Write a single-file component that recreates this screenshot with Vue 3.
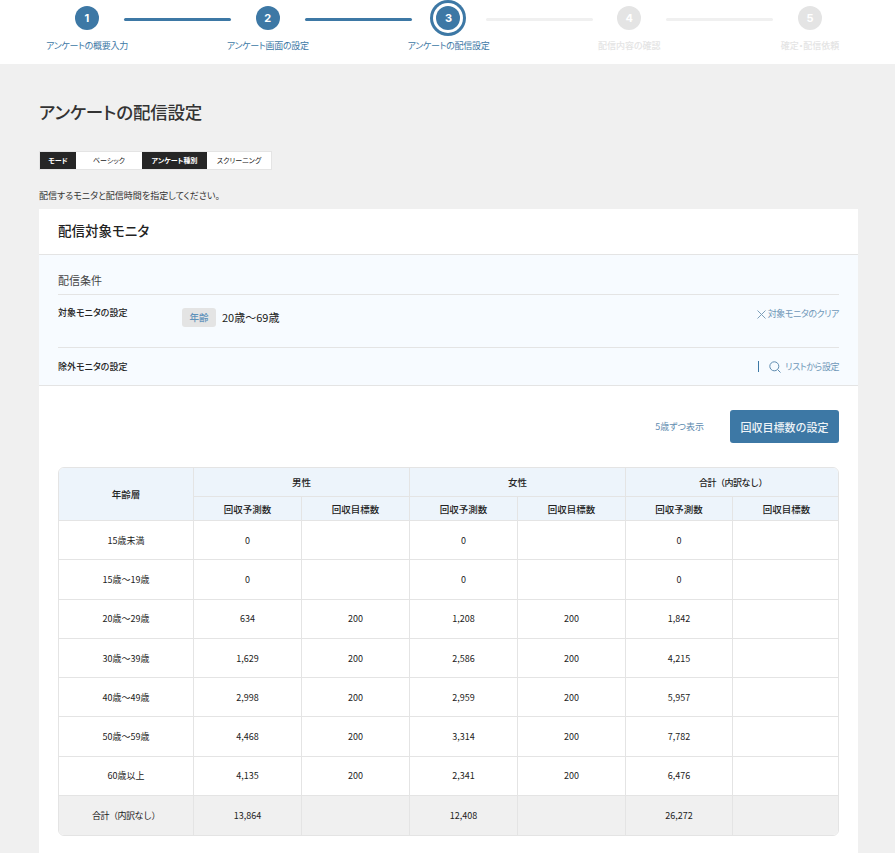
<script setup>
const steps = [
  { n: 1, label: 'アンケートの概要入力', state: 'done' },
  { n: 2, label: 'アンケート画面の設定', state: 'done' },
  { n: 3, label: 'アンケートの配信設定', state: 'active' },
  { n: 4, label: '配信内容の確認', state: 'todo' },
  { n: 5, label: '確定・配信依頼', state: 'todo' }
]
const rows = [
  ['15歳未満', '0', '', '0', '', '0', ''],
  ['15歳〜19歳', '0', '', '0', '', '0', ''],
  ['20歳〜29歳', '634', '200', '1,208', '200', '1,842', ''],
  ['30歳〜39歳', '1,629', '200', '2,586', '200', '4,215', ''],
  ['40歳〜49歳', '2,998', '200', '2,959', '200', '5,957', ''],
  ['50歳〜59歳', '4,468', '200', '3,314', '200', '7,782', ''],
  ['60歳以上', '4,135', '200', '2,341', '200', '6,476', '']
]
const total = ['合計（内訳なし）', '13,864', '', '12,408', '', '26,272', '']
</script>

<template>
  <div class="page">
    <header class="stepper">
      <div v-for="s in steps" :key="s.n" class="step" :class="s.state">
        <div class="circle-wrap">
          <span class="circle">{{ s.n }}</span>
        </div>
        <span class="step-label">{{ s.label }}</span>
        <span v-if="s.n < 5" class="connector"></span>
      </div>
    </header>

    <main class="main">
      <h1 class="title">アンケートの配信設定</h1>
      <div class="tags">
        <span class="tag-k">モード</span>
        <span class="tag-v basic">ベーシック</span>
        <span class="tag-k kind">アンケート種別</span>
        <span class="tag-v screening">スクリーニング</span>
      </div>
      <p class="lead">配信するモニタと配信時間を指定してください。</p>

      <section class="card">
        <h2 class="card-title">配信対象モニタ</h2>
        <div class="cond">
          <h3 class="cond-title">配信条件</h3>
          <div class="cond-row first">
            <span class="cond-label">対象モニタの設定</span>
            <span class="pill">年齢</span>
            <span class="cond-value">20歳〜69歳</span>
            <a class="link clear">
              <svg width="9" height="9" viewBox="0 0 9 9"><path d="M.5.5l8 8M8.500.5l-8 8" stroke="#7d9fba" fill="none" stroke-width="1"/></svg>
              対象モニタのクリア
            </a>
          </div>
          <div class="cond-row second">
            <span class="cond-label">除外モニタの設定</span>
            <span class="sep"></span>
            <a class="link search">
              <svg width="12" height="12" viewBox="0 0 12 12"><circle cx="5.300" cy="5.300" r="4.500" stroke="#5f8cb0" fill="none"/><path d="M8.500 8.500l3 3" stroke="#5f8cb0" fill="none"/></svg>
              リストから設定
            </a>
          </div>
        </div>

        <div class="actions">
          <a class="five">5歳ずつ表示</a>
          <button class="primary">回収目標数の設定</button>
        </div>

        <div class="table">
          <div class="th age-h">年齢層</div>
          <div class="th group g1">男性</div>
          <div class="th group g2">女性</div>
          <div class="th group g3 paren">合計（内訳なし）</div>
          <div class="th sub">回収予測数</div>
          <div class="th sub">回収目標数</div>
          <div class="th sub">回収予測数</div>
          <div class="th sub">回収目標数</div>
          <div class="th sub">回収予測数</div>
          <div class="th sub last">回収目標数</div>
          <template v-for="r in rows" :key="r[0]">
            <div v-for="(c, i) in r" :key="i" class="td" :class="{ last: i === 6 }">{{ c }}</div>
          </template>
          <div v-for="(c, i) in total" :key="'t' + i" class="td total" :class="{ last: i === 6, paren: i === 0 }">{{ c }}</div>
        </div>
      </section>
    </main>
  </div>
</template>

<style>
html, body { margin: 0; background: #f0f0f0; }
</style>

<style scoped>
.page {
  height: 853px;
  overflow: hidden;
  background: #f0f0f0;
  font-family: "Noto Sans CJK JP", "Noto Sans", sans-serif;
  font-feature-settings: "palt";
  color: #222;
}
.stepper {
  display: flex;
  height: 64px;
  background: #fff;
  overflow: hidden;
}
.step {
  position: relative;
  flex: 0 0 180.75px;
  display: flex;
  flex-direction: column;
  align-items: center;
  color: #3d78a5;
}
.step:first-child { margin-left: -3.4px; }
.circle-wrap {
  height: 36px;
  display: flex;
  align-items: center;
  justify-content: center;
}
.circle {
  width: 24px;
  height: 24px;
  border-radius: 50%;
  background: #3d78a5;
  color: #fff;
  font: 700 11px/24px Inter, sans-serif;
  text-align: center;
}
.active .circle {
  box-shadow: 0 0 0 3px #fff, 0 0 0 6px #3d78a5;
}
.todo .circle { background: #e4e4e4; }
.todo { color: #e4e4e4; }
.step-label {
  margin-top: 1px;
  font-size: 9px;
  line-height: 18px;
  white-space: nowrap;
  letter-spacing: -.3px;
}
.todo .step-label { letter-spacing: 0; font-weight: 500; }
.connector {
  position: absolute;
  left: 127.4px;
  top: 18px;
  width: 107px;
  height: 3px;
  border-radius: 2px;
  background: #3d78a5;
}
.active .connector, .todo .connector { background: #f0f0f0; }
.main { padding: 0 37px 0 39px; }
.title {
  margin: 34px 0 0;
  font-size: 17.500px;
  letter-spacing: -.2px;
  line-height: 28px;
  font-weight: 500;
  color: #333;
}
.tags {
  display: flex;
  width: fit-content;
  margin-top: 25px;
  border: 1px solid #e4e4e4;
  background: #fff;
  font-size: 7px;
  line-height: 17px;
  height: 17px;
}
.tag-k { background: #262626; color: #fff; text-align: center; font-weight: 700; }
.tag-v { text-align: center; }
.tag-k:first-child { width: 36px; }
.basic { width: 66px; }
.kind { width: 65px; }
.screening { width: 64px; }
.lead {
  margin: 17px 0 0;
  font-size: 9px;
  line-height: 18px;
  color: #333;
}
.card { margin-top: 4px; background: #fff; padding-bottom: 40px; }
.card-title {
  margin: 0;
  height: 45px;
  padding-left: 19px;
  font-size: 13.500px;
  line-height: 43px;
  font-weight: 500;
  color: #222;
  border-bottom: 1px solid #e4e4e4;
}
.cond {
  background: #f7fbff;
  border-bottom: 1px solid #e4e4e4;
  padding: 0 19px;
  height: 130px;
}
.cond-title {
  margin: 0;
  height: 39px;
  font-size: 11px;
  line-height: 50px;
  font-weight: 400;
  color: #444;
  border-bottom: 1px solid #e4e4e4;
}
.cond-row { display: flex; align-items: flex-start; position: relative; }
.first { height: 52px; border-bottom: 1px solid #e4e4e4; padding-top: 0; }
.second { height: 37px; align-items: center; }
.cond-label {
  width: 124px;
  font-size: 9px;
  font-weight: 500;
  line-height: 36px;
  color: #222;
}
.pill {
  margin-top: 13px;
  width: 34px;
  height: 19px;
  border-radius: 3px;
  background: #e4e4e4;
  color: #5f92bb;
  font-size: 9.500px;
  font-weight: 500;
  line-height: 19px;
  text-align: center;
}
.cond-value {
  margin: 13px 0 0 6px;
  font-size: 11px;
  line-height: 19px;
  color: #222;
}
.link {
  display: flex;
  align-items: center;
  gap: 2px;
  color: #6f97b8;
  font-size: 9px;
  letter-spacing: -.45px;
  white-space: nowrap;
}
.clear { margin: 11px 0 0 auto; line-height: 16px; }
.sep { margin-left: auto; width: 1px; height: 11px; background: #3d78a5; }
.search { margin-left: 10px; gap: 4px; }
.actions {
  display: flex;
  justify-content: flex-end;
  align-items: center;
  padding: 24px 19px 0 0;
}
.five { color: #5f8cb0; font-size: 9px; margin-right: 26px; }
.primary {
  width: 109px;
  height: 33px;
  padding: 0;
  border: 0;
  border-radius: 3px;
  background: #3d78a5;
  color: #eef3f7;
  font-family: inherit;
  font-size: 11px;
  font-weight: 500;
}
.table {
  margin: 24px 19px 0;
  width: 781px;
  box-sizing: border-box;
  display: grid;
  grid-template-columns: 135px 108px 108px 108px 108px 107px 107px;
  grid-template-rows: 29px 24px repeat(8, 39.3px);
  border: 1px solid #e4e4e4;
  border-radius: 6px;
  overflow: hidden;
  font-size: 9px;
  color: #222;
}
.th, .td {
  display: flex;
  align-items: center;
  justify-content: center;
  border-right: 1px solid #e4e4e4;
  border-bottom: 1px solid #e4e4e4;
  white-space: nowrap;
}
.th { background: #edf4fb; font-weight: 500; font-size: 9.500px; }
.age-h { grid-row: 1 / span 2; }
.group { grid-column: span 2; }
.g3 { border-right: 0; }
.last { border-right: 0; }
.total { background: #f0f0f0; border-bottom: 0; }
.paren { font-feature-settings: normal; font-size: 9px; letter-spacing: -.5px; }
</style>
